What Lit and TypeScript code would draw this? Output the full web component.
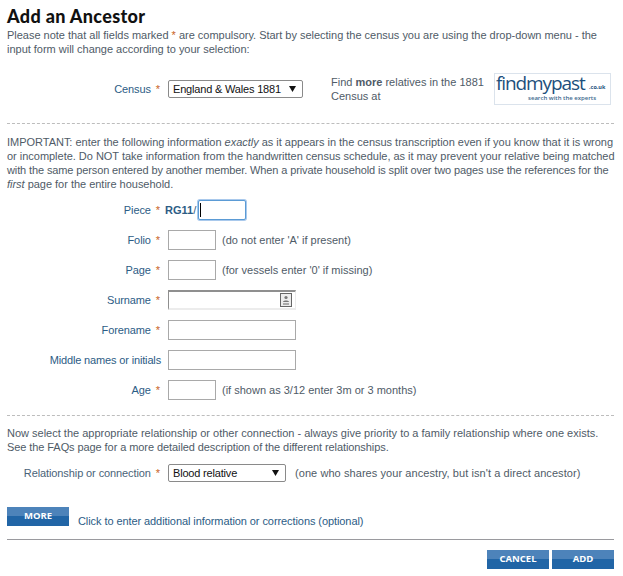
import { LitElement, css, html } from 'lit';
import { customElement } from 'lit/decorators.js';

const star = html`<span class="star">*</span>`;

const arrow = html`<svg class="arrow" width="7" height="6" viewBox="0 0 7 6"><path d="M0 0h7L3.5 6z"></path></svg>`;

@customElement('app-root')
export class AppRoot extends LitElement {
  static styles = css`
    :host {
      display: block;
      width: 623px;
      height: 576px;
      overflow: hidden;
      background: #fff;
      font: 11px/14px 'Liberation Sans', Arial, sans-serif;
      color: #4f5b67;
    }
    .page {
      box-sizing: border-box;
      width: 607px;
      margin-left: 7px;
      padding-top: 6px;
    }
    h1 {
      margin: 0;
      font: 900 18px/21px Lato, sans-serif;
      letter-spacing: 0.35px;
      color: #111;
    }
    p {
      margin: 0;
    }
    .intro {
      margin-top: 1px;
      letter-spacing: -0.015px;
    }
    .star {
      color: #c8621e;
      margin-left: 2px;
    }
    .label {
      color: #2c5c85;
      text-align: right;
      white-space: nowrap;
      letter-spacing: -0.1px;
    }
    .census {
      display: flex;
      align-items: center;
      margin-top: 17px;
      height: 32px;
    }
    .census .label {
      width: 153px;
    }
    .select {
      position: relative;
      margin-left: 8px;
      height: 18px;
    }
    .census .select {
      width: 135px;
      margin-left: 8px;
    }
    select {
      appearance: none;
      display: block;
      box-sizing: border-box;
      width: 100%;
      height: 18px;
      margin: 0;
      padding: 0 0 0 4px;
      font: 11px 'Liberation Sans', Arial, sans-serif;
      letter-spacing: -0.18px;
      color: #111;
      background: #fff;
      border: 1px solid #8a8a8a;
      border-radius: 2px;
    }
    .arrow {
      position: absolute;
      right: 7px;
      top: 6px;
      fill: #111;
    }
    .find {
      width: 164px;
      margin-left: 28px;
    }
    .find b {
      font-weight: bold;
    }
    .logo {
      box-sizing: border-box;
      position: relative;
      width: 117px;
      height: 32px;
      margin-left: -1px;
      border: 1px solid #dbe3ec;
    }
    .logo .name {
      position: absolute;
      left: 1px;
      top: 0;
      font: 19px/19px 'Open Sans', sans-serif;
      letter-spacing: -1.1px;
      color: #1d4f7c;
    }
    .logo .tag {
      position: absolute;
      left: 33px;
      top: 20px;
      font: 600 6px/9px 'Open Sans', sans-serif;
      color: #3d6a8e;
    }
    .logo .uk {
      position: absolute;
      left: 94px;
      top: 9px;
      font: bold 5.5px/8px 'Open Sans', sans-serif;
      color: #1d4f7c;
    }
    .logo svg {
      position: absolute;
      left: 0;
      top: 0;
    }
    hr {
      margin: 0;
      border: 0;
      border-top: 1px dashed #bdbdbd;
    }
    .important {
      margin-top: 11px;
      white-space: nowrap;
      letter-spacing: -0.02px;
    }
    .important .tight {
      letter-spacing: -0.12px;
    }
    .fields {
      display: flex;
      flex-direction: column;
      gap: 10px;
      margin-top: 9px;
      margin-bottom: 15px;
    }
    .row {
      display: flex;
      align-items: center;
      height: 20px;
    }
    .row .label {
      width: 153px;
      margin-right: 8px;
    }
    .row .label.plain {
      letter-spacing: -0.15px;
      width: 154px;
      margin-right: 7px;
    }
    .note {
      margin-left: 6px;
    }
    input {
      box-sizing: border-box;
      display: block;
      width: 48px;
      height: 20px;
      margin: 0;
      padding: 0;
      background: #fff;
      border: 1px solid #a9a9a9;
      outline: none;
    }
    .wide {
      width: 128px;
    }
    .prefix {
      margin-left: -3px;
      color: #2c5c85;
      font-weight: bold;
      width: 33px;
      white-space: nowrap;
    }
    .slash {
      font-weight: normal;
    }
    .focus {
      position: relative;
      width: 48px;
      height: 20px;
    }
    .focus input {
      border: 1px solid #5b9bd5;
      border-radius: 2px;
      box-shadow: 0 0 0 1px #a9c9ec;
    }
    .caret {
      position: absolute;
      left: 2px;
      top: 3px;
      width: 1px;
      height: 14px;
      background: #000;
    }
    .lookup {
      position: relative;
      width: 128px;
      height: 20px;
    }
    .lookup input {
      width: 128px;
      border: 0;
      border-top: 2px solid #8f8f8f;
      border-left: 1px solid #8f8f8f;
      border-bottom: 2px solid #ececec;
      border-right: 1px solid #ececec;
    }
    .lookup svg {
      position: absolute;
      right: 4px;
      top: 3px;
    }
    .connection {
      margin-top: 10px;
      white-space: nowrap;
    }
    .tight {
      letter-spacing: -0.08px;
    }
    .relation {
      display: flex;
      align-items: center;
      height: 18px;
      margin-top: 10px;
    }
    .relation .label {
      width: 153px;
      color: #4a6378;
    }
    .relation .select {
      width: 118px;
    }
    .relation .note {
      margin-left: 9px;
      letter-spacing: 0.07px;
    }
    .more {
      display: flex;
      align-items: flex-end;
      gap: 9px;
      margin-top: 25px;
    }
    .more span {
      color: #2c5c85;
      position: relative;
      top: 2px;
      letter-spacing: -0.08px;
    }
    button {
      display: block;
      box-sizing: border-box;
      width: 62px;
      height: 19px;
      margin: 0;
      padding: 0 0 1px;
      border: 0;
      font: bold 9.5px/18px 'Open Sans', sans-serif;
      color: #fff;
      background: linear-gradient(#4d83ba 0 50%, #2165a6 50% 100%);
    }
    .rule {
      margin-top: 13px;
      border-top: 1px solid #9a9a9e;
    }
    .actions {
      display: flex;
      justify-content: flex-end;
      gap: 3px;
      margin-top: 10px;
    }
  `;

  logo() {
    const dots = [
      [92, 6, 0.9], [98, 4, 1], [104, 5, 1], [109, 8, 1],
      [112, 15, 1.4], [110, 21, 1.4], [106, 24, 1.2], [101, 25, 1.8],
    ];
    return html`<div class="logo">
      <span class="name">findmypast</span>
      <span class="uk">.co.uk</span>
      <span class="tag">search with the experts</span>
      <svg width="115" height="30" viewBox="0 0 115 30">
        ${dots.map(([x, y, r]) => html`<circle cx=${x} cy=${y} r=${r} fill="#c9cc3f"></circle>`)}
      </svg>
    </div>`;
  }

  render() {
    return html`
      <div class="page">
        <h1>Add an Ancestor</h1>
        <p class="intro">
          Please note that all fields marked <span style="color:#c8621e">*</span> are compulsory. Start by selecting the
          census you are using the drop-down menu - the input form will change according to your selection:
        </p>
        <div class="census">
          <div class="label">Census ${star}</div>
          <div class="select"><select><option>England &amp; Wales 1881</option></select>${arrow}</div>
          <div class="find">Find <b>more</b> relatives in the 1881 Census at</div>
          ${this.logo()}
        </div>
        <hr style="margin-top:18px" />
        <p class="important">
          IMPORTANT: enter the following information <i>exactly</i> as it appears in the census transcription even if you
          know that it is wrong<br />or incomplete. Do NOT take information from the handwritten census schedule, as it may
          prevent your relative being matched<br /><span class="tight">with the same person entered by another member. When a private household is
          split over two pages use the references for the</span><br /><i>first</i> page for the entire household.
        </p>
        <div class="fields">
          <div class="row">
            <div class="label">Piece ${star}</div>
            <div class="prefix">RG11<span class="slash">/</span></div>
            <div class="focus"><input /><div class="caret"></div></div>
          </div>
          <div class="row">
            <div class="label">Folio ${star}</div>
            <input />
            <div class="note">(do not enter 'A' if present)</div>
          </div>
          <div class="row">
            <div class="label">Page ${star}</div>
            <input />
            <div class="note">(for vessels enter '0' if missing)</div>
          </div>
          <div class="row">
            <div class="label">Surname ${star}</div>
            <div class="lookup">
              <input />
              <svg width="12" height="14" viewBox="0 0 12 14">
                <rect x=".5" y=".5" width="11" height="13" fill="#ececec" stroke="#666"></rect>
                <circle cx="6" cy="4.5" r="1.6" fill="#777"></circle>
                <path d="M3 9c0-2 6-2 6 0z" fill="#777"></path>
                <rect x="3" y="10" width="6" height="2" fill="#aaa"></rect>
              </svg>
            </div>
          </div>
          <div class="row">
            <div class="label">Forename ${star}</div>
            <input class="wide" />
          </div>
          <div class="row">
            <div class="label plain">Middle names or initials</div>
            <input class="wide" />
          </div>
          <div class="row">
            <div class="label">Age ${star}</div>
            <input />
            <div class="note">(if shown as 3/12 enter 3m or 3 months)</div>
          </div>
        </div>
        <hr />
        <p class="connection">
          Now select the appropriate relationship or other connection - always give priority to a family relationship
          where one exists.<br /><span class="tight">See the FAQs page for a more detailed description of the different relationships.</span>
        </p>
        <div class="relation">
          <div class="label">Relationship or connection ${star}</div>
          <div class="select"><select><option>Blood relative</option></select>${arrow}</div>
          <div class="note">(one who shares your ancestry, but isn't a direct ancestor)</div>
        </div>
        <div class="more">
          <button>MORE</button>
          <span>Click to enter additional information or corrections (optional)</span>
        </div>
        <div class="rule"></div>
        <div class="actions">
          <button>CANCEL</button>
          <button>ADD</button>
        </div>
      </div>
    `;
  }
}
